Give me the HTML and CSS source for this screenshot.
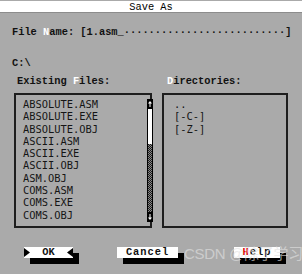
FILE: index.html
```html
<!DOCTYPE html>
<html>
<head>
<meta charset="utf-8">
<title>Save As</title>
<link rel="stylesheet" href="styles.css">
</head>
<body>
<div class="dialog">
  <div class="titlebar">Save As</div>
  <div class="fname">File <span class="hk">N</span>ame: [1.asm_<span class="dots">··························</span>]</div>
  <div class="path">C:\</div>
  <div class="lists">
    <div class="col files-col">
      <div class="label">Existing <span class="hk">F</span>iles:</div>
      <div class="box filebox">
        <ul class="items">
          <li>ABSOLUTE.ASM</li>
          <li>ABSOLUTE.EXE</li>
          <li>ABSOLUTE.OBJ</li>
          <li>ASCII.ASM</li>
          <li>ASCII.EXE</li>
          <li>ASCII.OBJ</li>
          <li>ASM.OBJ</li>
          <li>COMS.ASM</li>
          <li>COMS.EXE</li>
          <li>COMS.OBJ</li>
        </ul>
        <div class="scrollbar">
          <div class="arrow"><svg width="4" height="10" viewBox="0 0 4 10"><polygon points="2,2 4,4.5 0,4.5" fill="#fff"/><rect x="1.5" y="4" width="1" height="4" fill="#fff"/></svg></div>
          <div class="thumb"></div>
          <div class="track"></div>
          <div class="arrow"><svg width="4" height="10" viewBox="0 0 4 10"><polygon points="2,8 4,5.5 0,5.5" fill="#fff"/><rect x="1.5" y="2" width="1" height="4" fill="#fff"/></svg></div>
        </div>
      </div>
    </div>
    <div class="col dir-col">
      <div class="label"><span class="hk">D</span>irectories:</div>
      <div class="box dirbox">
        <ul class="items">
          <li>..</li>
          <li>[-C-]</li>
          <li>[-Z-]</li>
        </ul>
      </div>
    </div>
  </div>
  <div class="buttons">
    <div class="btn ok">
      <svg width="6" height="9" viewBox="0 0 6 9"><polygon points="0,0 6,4.5 0,9" fill="#000"/></svg>
      <span>OK</span>
      <svg width="6" height="9" viewBox="0 0 6 9"><polygon points="6,0 0,4.5 6,9" fill="#000"/></svg>
    </div>
    <div class="btn cancel"><span>Cancel</span></div>
    <div class="btn help"><span><span class="hkr">H</span>elp</span></div>
  </div>
  <div class="watermark">CSDN @除了学习</div>
</div>
</body>
</html>
```
FILE: styles.css
```css
html, body {
  margin: 0;
  padding: 0;
  background: #aaaaaa;
}
.dialog {
  position: relative;
  width: 302px;
  height: 274px;
  overflow: hidden;
  background: #aaaaaa;
  font-family: "Liberation Mono", "DejaVu Sans Mono", monospace;
  font-size: 10.35px;
  color: #111;
}
.titlebar {
  margin-top: 1px;
  height: 11px;
  line-height: 12px;
  background: #fff;
  text-align: center;
  border-bottom: 1px solid #8c8c8c;
  color: #000;
}
.fname {
  margin-top: 13px;
  padding-left: 12px;
  line-height: 12px;
  font-weight: bold;
  white-space: pre;
}
.dots {
  font-weight: bold;
}
.hk {
  color: #fff;
}
.hkr {
  color: #e00000;
}
.path {
  margin-top: 19px;
  padding-left: 12px;
  line-height: 12px;
  font-weight: bold;
}
.lists {
  display: flex;
  margin-top: 6px;
  padding-left: 14px;
  gap: 10px;
}
.col {
  display: flex;
  flex-direction: column;
}
.files-col { width: 138px; }
.dir-col { width: 126px; }
.label {
  line-height: 12px;
  font-weight: bold;
  margin-bottom: 6px;
}
.files-col .label { padding-left: 3px; }
.dir-col .label { padding-left: 5px; }
.box {
  position: relative;
  height: 131px;
  border: 2px solid #1e1e1e;
}
.items {
  list-style: none;
  margin: 0;
  padding: 3px 0 0 7px;
  font-family: "DejaVu Sans Mono", monospace;
  font-size: 10.4px;
  line-height: 12.3px;
  color: #151515;
}
.dirbox .items { padding-left: 10px; }
.scrollbar {
  position: absolute;
  left: 131px;
  top: 4px;
  bottom: 4px;
  width: 4px;
  border-left: 1px solid #000;
  border-right: 1px solid #000;
  display: flex;
  flex-direction: column;
  background-color: #777;
  background-image: conic-gradient(#1a1a1a 25%, #888 0 50%, #1a1a1a 0 75%, #888 0);
  background-size: 2px 2px;
}
.arrow {
  height: 10px;
  background: #000;
  display: flex;
}
.arrow svg { display: block; }
.thumb {
  height: 35px;
  background: #fff;
}
.track { flex: 1; }
.buttons {
  display: flex;
  margin-top: 19px;
  padding-left: 24px;
}
.btn {
  height: 11px;
  line-height: 11px;
  background: #fff;
  box-shadow: 6px 6px 0 #000;
  font-weight: bold;
  color: #111;
  display: flex;
  align-items: center;
  justify-content: center;
}
.ok {
  width: 49px;
  justify-content: space-between;
}
.ok svg { display: block; }
.cancel {
  width: 61px;
  margin-left: 44px;
  letter-spacing: 1px;
}
.help {
  width: 46px;
  margin-left: 56px;
  letter-spacing: 1px;
}
.watermark {
  position: absolute;
  left: 184px;
  top: 242px;
  font-family: "Liberation Sans", "Noto Sans CJK SC", sans-serif;
  font-size: 15px;
  letter-spacing: -0.3px;
  color: rgba(225, 225, 225, 0.65);
  white-space: nowrap;
}
```
